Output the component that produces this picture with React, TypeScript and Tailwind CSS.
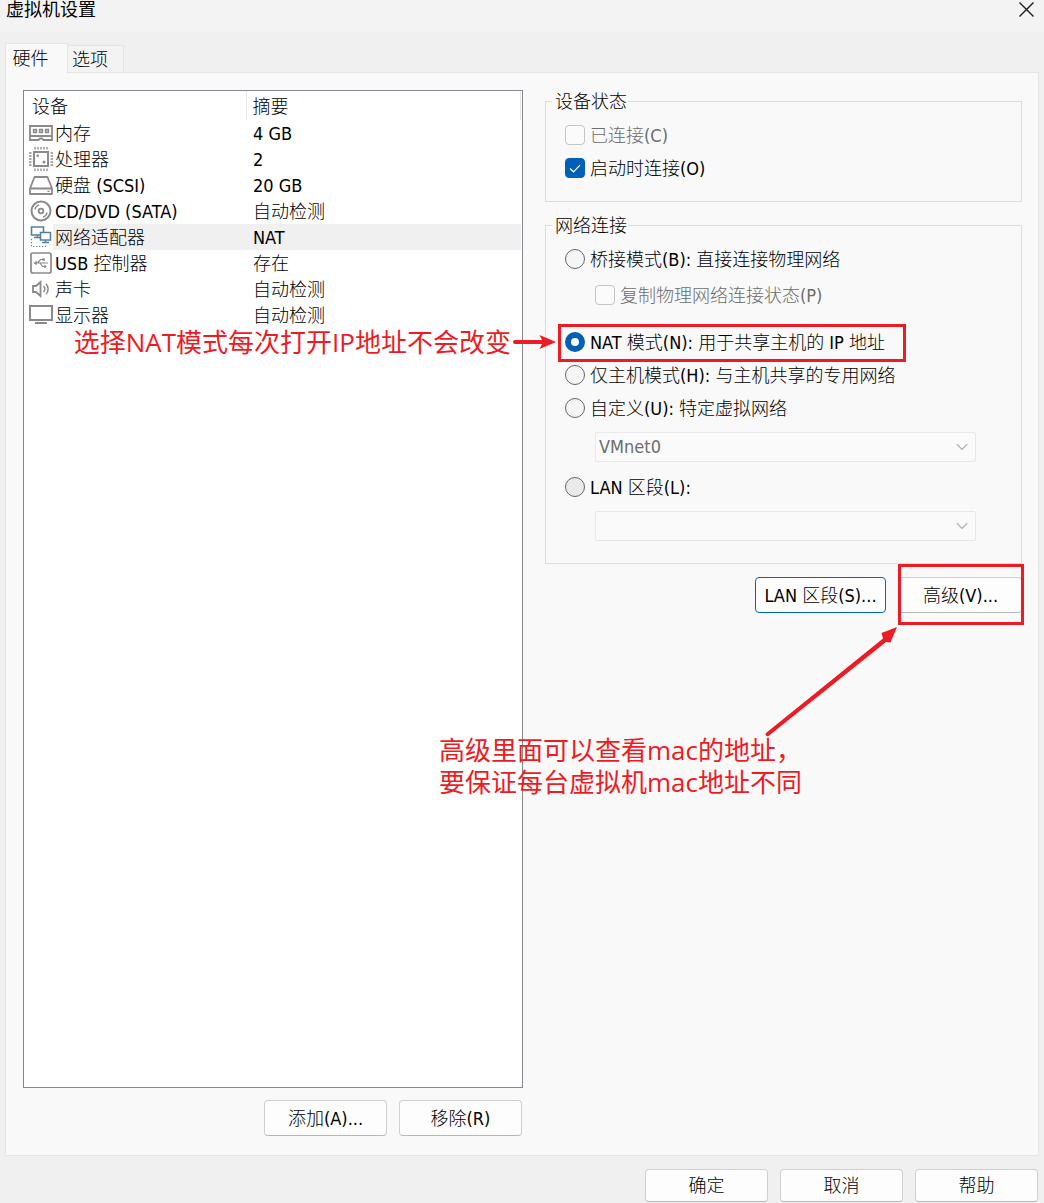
import React, { useState } from "react";
import type { ReactNode } from "react";

const UI_FONT = "font-['DejaVu_Sans_Condensed','Noto_Sans_CJK_SC',sans-serif]";
const NOTE =
  "absolute z-10 whitespace-nowrap font-['Open_Sans','Noto_Sans_CJK_SC',sans-serif] text-[26px] leading-8 font-normal text-[#ed1c24]";

function Icon({ children, color = "#8a8a8a" }: { children: ReactNode; color?: string }) {
  return (
    <svg
      width="24"
      height="24"
      viewBox="0 0 24 24"
      fill="none"
      stroke={color}
      strokeWidth="2"
      className="block shrink-0"
      aria-hidden="true"
    >
      {children}
    </svg>
  );
}

const MemoryIcon = () => (
  <Icon>
    <path d="M1 5H23V15H1Z M1 15V19H9.500L11 17.500H13L14.500 19H23V15" strokeWidth="1.8" />
    <path d="M4.500 8.500H7.500V11.500H4.500Z M10.500 8.500H13.500V11.500H10.500Z M16.500 8.500H19.500V11.500H16.500Z" fill="#c8c8c8" strokeWidth="1.4" />
  </Icon>
);

const CpuIcon = () => (
  <Icon>
    <rect x="5" y="5" width="14" height="14" />
    <path
      d="M6 0V2.500M9 0V2.500M12 0V2.500M15 0V2.500M18 0V2.500M6 21.500V24M9 21.500V24M12 21.500V24M15 21.500V24M18 21.500V24M0 6H2.500M0 9H2.500M0 12H2.500M0 15H2.500M0 18H2.500M21.500 6H24M21.500 9H24M21.500 12H24M21.500 15H24M21.500 18H24"
      strokeWidth="1.3"
    />
    <circle cx="8.7" cy="8.7" r="1.3" fill="#8a8a8a" stroke="none" />
    <circle cx="15" cy="15" r="1.5" fill="#8a8a8a" stroke="none" />
  </Icon>
);

const DiskIcon = () => (
  <Icon>
    <path d="M1 15.500L5.500 4H18.500L23 15.500V21H1Z M1 15.500H23" strokeLinejoin="round" strokeWidth="1.8" />
    <path d="M18.500 18.300H20.500" strokeWidth="1.400" />
  </Icon>
);

const DiscIcon = () => (
  <Icon>
    <circle cx="12" cy="12" r="9.5" />
    <circle cx="12" cy="12" r="2.3" strokeWidth="1.8" />
    <path d="M5.800 10.500A6.400 6.400 0 0 1 10 5.900M18.200 13.500A6.400 6.400 0 0 1 14 18.100" strokeWidth="1.200" />
  </Icon>
);

const NetworkIcon = () => (
  <Icon color="#5580a0">
    <path d="M2.500 2H14.500V10H2.500Z M8.500 10V12.500M5 12.500H11.500" strokeWidth="1.6" />
    <path d="M11.500 7.500H21.500V15H11.500Z" fill="#fff" strokeWidth="1.6" />
    <path d="M16.500 15V17.500M13 17.500H20" strokeWidth="1.6" />
    <path d="M2.500 14V21.500H16.500V19.500" strokeWidth="1.2" strokeDasharray="1.3 1.7" />
  </Icon>
);

const UsbIcon = () => (
  <Icon>
    <rect x="2" y="2" width="20" height="20" rx="2" strokeWidth="1.700" />
    <path d="M6.500 12H19M8.500 12L11.500 8.500H14M11 12L13.500 15.500H16" strokeWidth="1.200" />
    <path d="M4.500 12L7.800 9.800V14.200Z" fill="#8a8a8a" stroke="none" />
    <path d="M13.500 7.300H15.900V9.700H13.500Z" fill="#8a8a8a" stroke="none" />
    <circle cx="16" cy="15.500" r="1.3" fill="#8a8a8a" stroke="none" />
  </Icon>
);

const SoundIcon = () => (
  <Icon>
    <path d="M4 9H7L11.500 5V19L7 15H4Z" strokeWidth="1.800" />
    <path d="M14.500 9A4.500 4.500 0 0 1 14.500 15M17 6.800A7.500 7.500 0 0 1 17 17.200" strokeWidth="1.500" />
  </Icon>
);

const MonitorIcon = () => (
  <Icon>
    <path d="M1 3H23V17H1Z" />
    <path d="M6 20H18" />
  </Icon>
);

const devices = [
  { name: "内存", summary: "4 GB", icon: <MemoryIcon /> },
  { name: "处理器", summary: "2", icon: <CpuIcon /> },
  { name: "硬盘 (SCSI)", summary: "20 GB", icon: <DiskIcon /> },
  { name: "CD/DVD (SATA)", summary: "自动检测", icon: <DiscIcon /> },
  { name: "网络适配器", summary: "NAT", icon: <NetworkIcon />, selected: true },
  { name: "USB 控制器", summary: "存在", icon: <UsbIcon /> },
  { name: "声卡", summary: "自动检测", icon: <SoundIcon /> },
  { name: "显示器", summary: "自动检测", icon: <MonitorIcon /> },
];

function DeviceTable() {
  return (
    <div className="flex-1 border border-[#828790] bg-white pr-px">
      <table className="w-full table-fixed border-collapse text-left">
        <colgroup>
          <col className="w-[222px]" />
          <col />
        </colgroup>
        <thead>
          <tr className="h-[29px]">
            <th scope="col" className="border-r border-[#e5e5e5] p-0 pt-[2px] pl-2 font-light">
              设备
            </th>
            <th scope="col" className="border-r border-[#e5e5e5] p-0 pt-[2px] pl-[6px] font-light">
              摘要
            </th>
          </tr>
        </thead>
        <tbody>
          {devices.map((d) => (
            <tr key={d.name} className="h-[26px]">
              <td className="p-0">
                <div className="flex h-[26px] items-center pl-[5px]">
                  {d.icon}
                  <span className={d.selected ? "flex-1 bg-[#f0f0f0] pt-[2px] pl-[2px]" : "flex-1 pt-[2px] pl-[2px]"}>
                    {d.name}
                  </span>
                </div>
              </td>
              <td className={d.selected ? "bg-[#f0f0f0] p-0 pt-[2px] pl-[7px]" : "p-0 pt-[2px] pl-[7px]"}>{d.summary}</td>
            </tr>
          ))}
        </tbody>
      </table>
    </div>
  );
}

function PushButton({ children, wide, focused, short }: { children: ReactNode; wide?: boolean; focused?: boolean; short?: boolean }) {
  return (
    <button
      type="button"
      className={[
        "rounded-[4px] border bg-[#fdfdfd] pt-px text-center",
        wide ? "w-[131px]" : "w-[123px]",
        short ? "h-[33px]" : "h-9",
        focused ? "border-[#0067c0]" : "border-[#d0d0d0] border-b-[#b8b8b8]",
      ].join(" ")}
    >
      {children}
    </button>
  );
}

function CheckRow({ label, defaultChecked, disabled }: { label: string; defaultChecked?: boolean; disabled?: boolean }) {
  return (
    <label className={disabled ? "flex h-[33px] w-fit items-center gap-[5px] text-[#6d6d6d]" : "flex h-[33px] w-fit items-center gap-[5px]"}>
      <span className="mb-px grid size-5">
        <input
          type="checkbox"
          defaultChecked={defaultChecked}
          disabled={disabled}
          className="peer col-start-1 row-start-1 size-5 appearance-none rounded-[4px] border border-[#868686] bg-[#f5f5f5] checked:border-[#005fb8] checked:bg-[#005fb8] disabled:border-[#c5c5c5] disabled:bg-[#fbfbfb]"
        />
        <svg viewBox="0 0 20 20" className="pointer-events-none invisible col-start-1 row-start-1 size-5 peer-checked:visible" fill="none" stroke="#fff" strokeWidth="1.2" aria-hidden="true">
          <path d="M5 10.500L8.500 13.800L15 7.200" />
        </svg>
      </span>
      {label}
    </label>
  );
}

type Mode = "bridge" | "nat" | "host" | "custom" | "lan";

function RadioRow({ label, value, mode, onPick, dim }: { label: string; value: Mode; mode: Mode; onPick: (m: Mode) => void; dim?: boolean }) {
  return (
    <label className="flex h-[33px] w-fit items-center gap-[5px] whitespace-nowrap">
      <input
        type="radio"
        name="network-mode"
        checked={mode === value}
        onChange={() => onPick(value)}
        className={[
          "mb-px size-5 shrink-0 appearance-none rounded-full border border-[#666666] checked:border-[6px] checked:border-[#005fb8] checked:bg-white",
          dim ? "bg-[#eaeaea]" : "bg-[#f5f5f5]",
        ].join(" ")}
      />
      {label}
    </label>
  );
}

function Combo({ label, value }: { label: string; value: string }) {
  return (
    <div className="mt-[7px] mr-[45px] ml-[30px] grid h-[30px] items-center">
      <select
        aria-label={label}
        disabled
        defaultValue={value}
        className="col-start-1 row-start-1 h-[30px] w-full appearance-none rounded-[2px] border border-[#e8e8e8] bg-[#fafafa] pl-[3px] text-[#6d6d6d] opacity-100"
      >
        <option value={value}>{value}</option>
      </select>
      <svg width="12" height="8" viewBox="0 0 12 8" className="pointer-events-none col-start-1 row-start-1 mr-2 justify-self-end" fill="none" stroke="#aaaaaa" strokeWidth="1.2" aria-hidden="true">
        <path d="M0.800 1.200L6 6.400L11.200 1.200" />
      </svg>
    </div>
  );
}

function Group({ title, className, children }: { title: string; className: string; children: ReactNode }) {
  return (
    <fieldset className={"min-w-0 border border-[#dcdcdc] pt-[7px] pl-[19px] " + className}>
      <legend className="-ml-[13px] pt-[2px] pr-px pl-[3px] leading-5">{title}</legend>
      {children}
    </fieldset>
  );
}

export default function App() {
  const [mode, setMode] = useState<Mode>("nat");

  return (
    <div className={"flex min-h-screen flex-col overflow-hidden bg-[#f0f0f0] text-[18px] leading-6 font-light text-black " + UI_FONT}>
      <header className="flex h-8 items-start justify-between bg-[#f3f3f3] pr-[10px] pl-[6px]">
        <h1 className="font-normal leading-5">虚拟机设置</h1>
        <button type="button" aria-label="关闭" className="pt-[2px]">
          <svg width="15" height="15" viewBox="0 0 15 15" fill="none" stroke="#1a1a1a" strokeWidth="1.4" aria-hidden="true">
            <path d="M0.500 0.500L14.500 14.500M14.500 0.500L0.500 14.500" />
          </svg>
        </button>
      </header>

      <main className="mx-[5px] mt-[11px] flex flex-1 flex-col">
        <div role="tablist" className="z-10 -mb-px flex items-end">
          <button type="button" role="tab" aria-selected="true" className="h-[30px] w-[63px] border border-b-0 border-[#e5e5e5] bg-[#f9f9f9] pr-[12px]">
            硬件
          </button>
          <button type="button" role="tab" aria-selected="false" className="h-[28px] w-14 border border-l-0 border-[#e5e5e5] bg-[#f3f3f3] pt-px pr-[11px]">
            选项
          </button>
        </div>

        <div className="grid flex-1 grid-cols-[500fr_477fr] gap-x-[22px] border border-[#e5e5e5] bg-[#f9f9f9] pt-[17px] pr-4 pb-[19px] pl-[17px]">
          <section className="flex flex-col">
            <DeviceTable />
            <div className="mt-3 flex justify-end gap-3 pr-px">
              <PushButton>添加(A)...</PushButton>
              <PushButton>移除(R)</PushButton>
            </div>
          </section>

          <section>
            <Group title="设备状态" className="pb-4">
              <CheckRow label="已连接(C)" disabled />
              <CheckRow label="启动时连接(O)" defaultChecked />
            </Group>

            <Group title="网络连接" className="mt-3 pb-[22px]">
              <RadioRow label="桥接模式(B): 直接连接物理网络" value="bridge" mode={mode} onPick={setMode} />
              <div className="mt-[3px] ml-[30px]">
                <CheckRow label="复制物理网络连接状态(P)" disabled />
              </div>
              <div className="relative mt-[14px] w-fit">
                <RadioRow label="NAT 模式(N): 用于共享主机的 IP 地址" value="nat" mode={mode} onPick={setMode} />
                <div className="pointer-events-none absolute -top-[2px] -right-[21px] -bottom-[3px] -left-[7px] border-[3px] border-[#ed1c24]" />
                <div className={NOTE + " pointer-events-none top-0 right-full mr-[9px] flex items-center gap-[2px]"}>
                  <span>选择NAT模式每次打开IP地址不会改变</span>
                  <svg width="43" height="14" viewBox="0 0 43 14" fill="#ed1c24" aria-hidden="true">
                    <path d="M2 5H29L26.500 0L43 7L26.500 14L29 9H2A2 2 0 0 1 2 5Z" />
                  </svg>
                </div>
              </div>
              <RadioRow label="仅主机模式(H): 与主机共享的专用网络" value="host" mode={mode} onPick={setMode} />
              <RadioRow label="自定义(U): 特定虚拟网络" value="custom" mode={mode} onPick={setMode} />
              <Combo label="特定虚拟网络" value="VMnet0" />
              <div className="mt-[9px]">
                <RadioRow label="LAN 区段(L):" value="lan" mode={mode} onPick={setMode} dim />
              </div>
              <Combo label="LAN 区段" value="" />
            </Group>

            <div className="mt-[13px] flex justify-end gap-[13px]">
              <PushButton wide focused>
                LAN 区段(S)...
              </PushButton>
              <div className="relative">
                <PushButton>高级(V)...</PushButton>
                <div className="pointer-events-none absolute -top-[13px] -right-[2px] -bottom-[12px] -left-px border-[3px] border-[#ed1c24]" />
                <svg width="134" height="112" viewBox="0 0 134 112" fill="#ed1c24" className="pointer-events-none absolute top-full right-full mt-3" aria-hidden="true">
                  <path d="M1 108L118 13.500L116.500 8L132 2L125.500 17.500L121 17L3.500 111A2 2 0 0 1 1 108Z" />
                </svg>
                <p className={NOTE + " pointer-events-none top-[157px] -left-[460px]"}>
                  高级里面可以查看mac的地址，
                  <br />
                  要保证每台虚拟机mac地址不同
                </p>
              </div>
            </div>
          </section>
        </div>
      </main>

      <footer className="flex justify-end gap-3 px-[6px] pt-[13px] pb-px">
        <PushButton short>确定</PushButton>
        <PushButton short>取消</PushButton>
        <PushButton short>帮助</PushButton>
      </footer>
    </div>
  );
}
